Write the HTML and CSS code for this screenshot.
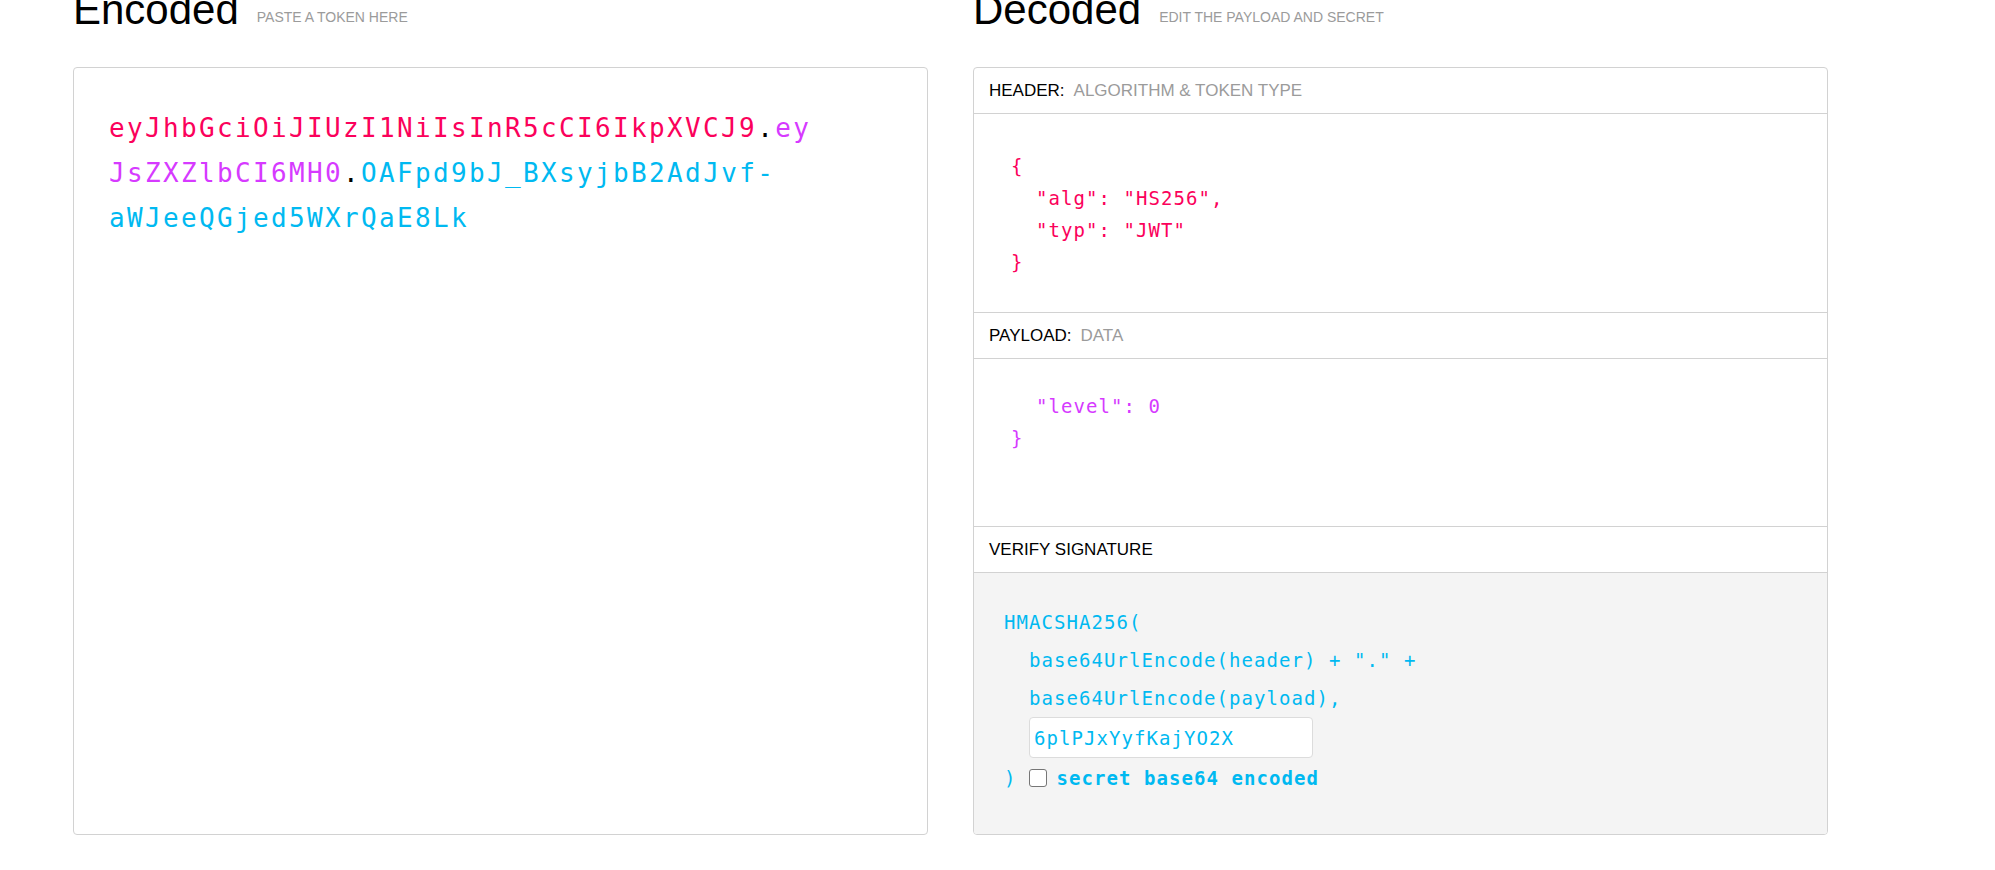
FILE: index.html
```html
<!DOCTYPE html>
<html lang="en">
<head>
<meta charset="utf-8">
<title>JWT Debugger</title>
<link rel="stylesheet" href="styles.css">
</head>
<body>
<div class="page">
  <section class="col">
    <div class="col-head"><h2 class="title">Encoded</h2><span class="subtitle">PASTE A TOKEN HERE</span></div>
    <div class="panel encoded">
      <div class="token"><span class="t-header">eyJhbGciOiJIUzI1NiIsInR5cCI6IkpXVCJ9</span><span class="t-dot">.</span><span class="t-payload">eyJsZXZlbCI6MH0</span><span class="t-dot">.</span><span class="t-sig">OAFpd9bJ_BXsyjbB2AdJvf-aWJeeQGjed5WXrQaE8Lk</span></div>
    </div>
  </section>
  <section class="col">
    <div class="col-head"><h2 class="title">Decoded</h2><span class="subtitle">EDIT THE PAYLOAD AND SECRET</span></div>
    <div class="panel decoded">
      <div class="sec-label"><span>HEADER:</span><span class="muted">ALGORITHM &amp; TOKEN TYPE</span></div>
      <div class="code code-header">{
  "alg": "HS256",
  "typ": "JWT"
}</div>
      <div class="sec-label"><span>PAYLOAD:</span><span class="muted">DATA</span></div>
      <div class="code code-payload">  "level": 0
}</div>
      <div class="sec-label"><span>VERIFY SIGNATURE</span></div>
      <div class="sig">
        <div class="sig-line">HMACSHA256(</div>
        <div class="sig-line indent">base64UrlEncode(header) + "." +</div>
        <div class="sig-line indent">base64UrlEncode(payload),</div>
        <input class="secret-input" type="text" value="6plPJxYyfKajYO2X">
        <div class="sig-line sig-last"><span>)</span><input class="check" type="checkbox" id="b64"><label class="check-label" for="b64">secret base64 encoded</label></div>
      </div>
    </div>
  </section>
</div>
</body>
</html>
```
FILE: styles.css
```css
* {
  box-sizing: border-box;
}

body {
  margin: 0;
  background: #ffffff;
  color: #000000;
  font-family: "Liberation Sans", Arial, sans-serif;
}

.page {
  display: flex;
  gap: 45px;
  padding-left: 73px;
  margin-top: -11px;
}

.col {
  width: 855px;
  display: flex;
  flex-direction: column;
}

.col-head {
  font-size: 42px;
  line-height: 42px;
  height: 42px;
  white-space: nowrap;
  margin-bottom: 36px;
}

.title {
  display: inline;
  font-size: 42px;
  font-weight: 400;
  margin: 0 18px 0 0;
}

.subtitle {
  font-size: 14px;
  line-height: 1;
  color: #9b9b9b;
  vertical-align: 2px;
}

.panel {
  height: 768px;
  border: 1px solid #d2d2d2;
  border-radius: 4px;
  overflow: hidden;
}

.encoded {
  padding: 38px 107px 0 35px;
}

.token {
  font-family: "DejaVu Sans Mono", monospace;
  font-size: 26px;
  letter-spacing: 2.35px;
  line-height: 45px;
  overflow-wrap: anywhere;
}

.t-header {
  color: #fb015b;
}

.t-payload {
  color: #d63aff;
}

.t-sig {
  color: #00b9f1;
}

.t-dot {
  color: #000000;
}

.decoded {
  display: flex;
  flex-direction: column;
}

.sec-label {
  height: 46px;
  flex: none;
  border-bottom: 1px solid #d2d2d2;
  display: flex;
  align-items: center;
  gap: 9px;
  padding-left: 15px;
  font-size: 17px;
  color: #000000;
}

.sec-label .muted {
  color: #9b9b9b;
}

.code {
  flex: none;
  border-bottom: 1px solid #d2d2d2;
  font-family: "DejaVu Sans Mono", monospace;
  font-size: 19px;
  letter-spacing: 1.06px;
  line-height: 32px;
  white-space: pre;
  padding-left: 37px;
}

.code-header {
  height: 199px;
  padding-top: 36px;
  color: #fb015b;
}

.code-payload {
  height: 168px;
  padding-top: 31px;
  color: #d63aff;
}

.sig {
  flex: 1;
  background: #f4f4f4;
  padding: 30px 0 0 30px;
  color: #00b9f1;
  font-family: "DejaVu Sans Mono", monospace;
  font-size: 19px;
  letter-spacing: 1.06px;
}

.sig-line {
  height: 38px;
  line-height: 38px;
  white-space: pre;
}

.indent {
  padding-left: 25px;
}

.secret-input {
  display: block;
  margin: 0 0 0 25px;
  width: 284px;
  height: 41px;
  border: 1px solid #dcdcdc;
  border-radius: 4px;
  background: #ffffff;
  padding: 0 0 0 4px;
  font-family: "DejaVu Sans Mono", monospace;
  font-size: 19px;
  letter-spacing: 1.06px;
  color: #00b9f1;
  outline: none;
}

.sig-last {
  margin-top: 1px;
  display: flex;
  align-items: center;
}

.check {
  appearance: none;
  -webkit-appearance: none;
  width: 18px;
  height: 18px;
  margin: 0 10px 0 12px;
  border: 1.5px solid #767676;
  border-radius: 3px;
  background: #ffffff;
}

.check-label {
  font-weight: 700;
}
```
